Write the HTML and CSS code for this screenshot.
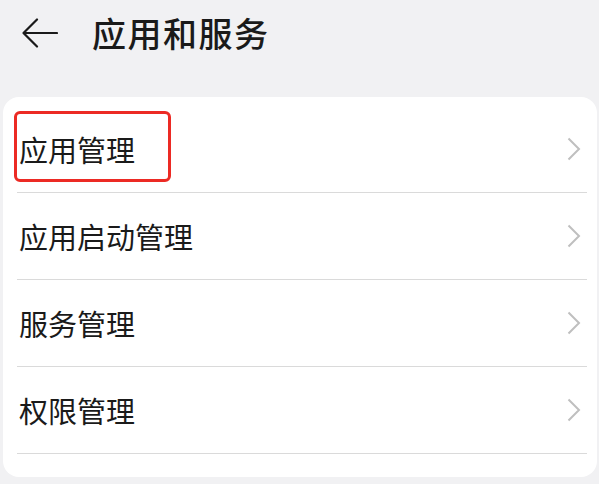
FILE: index.html
```html
<!DOCTYPE html>
<html lang="zh-CN">
<head>
<meta charset="utf-8">
<link rel="stylesheet" href="styles.css">
</head>
<body>
<div class="page">
  <header class="header">
    <svg class="back" width="36" height="30" viewBox="0 0 36 30">
      <path d="M15 1.5 L1.5 15 L15 28.5 M1.5 15 H35" fill="none" stroke="#1a1a1a" stroke-width="2.2" stroke-linecap="round" stroke-linejoin="round"/>
    </svg>
    <h1 class="title">应用和服务</h1>
  </header>
  <section class="card">
    <div class="row">
      <span class="label">应用管理</span>
      <svg class="chev" width="14" height="24" viewBox="0 0 14 24"><path d="M1.5 1.5 L12 12 L1.5 22.5" fill="none" stroke="#bfbfbf" stroke-width="2"/></svg>
      <span class="highlight"></span>
    </div>
    <div class="row">
      <span class="label">应用启动管理</span>
      <svg class="chev" width="14" height="24" viewBox="0 0 14 24"><path d="M1.5 1.5 L12 12 L1.5 22.5" fill="none" stroke="#bfbfbf" stroke-width="2"/></svg>
    </div>
    <div class="row">
      <span class="label">服务管理</span>
      <svg class="chev" width="14" height="24" viewBox="0 0 14 24"><path d="M1.5 1.5 L12 12 L1.5 22.5" fill="none" stroke="#bfbfbf" stroke-width="2"/></svg>
    </div>
    <div class="row">
      <span class="label">权限管理</span>
      <svg class="chev" width="14" height="24" viewBox="0 0 14 24"><path d="M1.5 1.5 L12 12 L1.5 22.5" fill="none" stroke="#bfbfbf" stroke-width="2"/></svg>
    </div>
  </section>
</div>
</body>
</html>
```
FILE: styles.css
```css
html, body {
  margin: 0;
  padding: 0;
  background: #f1f1f3;
}
body {
  font-family: "Noto Sans CJK SC", "Noto Sans", sans-serif;
  color: #1a1a1a;
  width: 599px;
  height: 484px;
  overflow: hidden;
}
.header {
  height: 97px;
  display: flex;
  align-items: flex-start;
  padding-left: 22px;
  box-sizing: border-box;
}
.back {
  display: block;
  margin-top: 18px;
}
.title {
  margin: 16px 0 0 34px;
  font-size: 34px;
  font-weight: 500;
  line-height: 34px;
  letter-spacing: 1.5px;
  color: #1a1a1a;
}
.card {
  background: #ffffff;
  margin: 0 2px 0 3px;
  border-radius: 16px;
  padding: 9px 0 23px;
}
.row {
  position: relative;
  height: 86px;
  border-bottom: 1px solid #dadada;
  margin: 0 10px 0 14px;
  display: flex;
  align-items: center;
  justify-content: space-between;
  padding-left: 2px;
  padding-right: 6px;
}
.label {
  font-size: 29px;
  line-height: 32px;
  color: #1a1a1a;
}
.chev {
  display: block;
}
.highlight {
  position: absolute;
  left: -3px;
  top: 5px;
  width: 157px;
  height: 71px;
  box-sizing: border-box;
  border: 3px solid #ec2a24;
  border-radius: 6px;
}
```
